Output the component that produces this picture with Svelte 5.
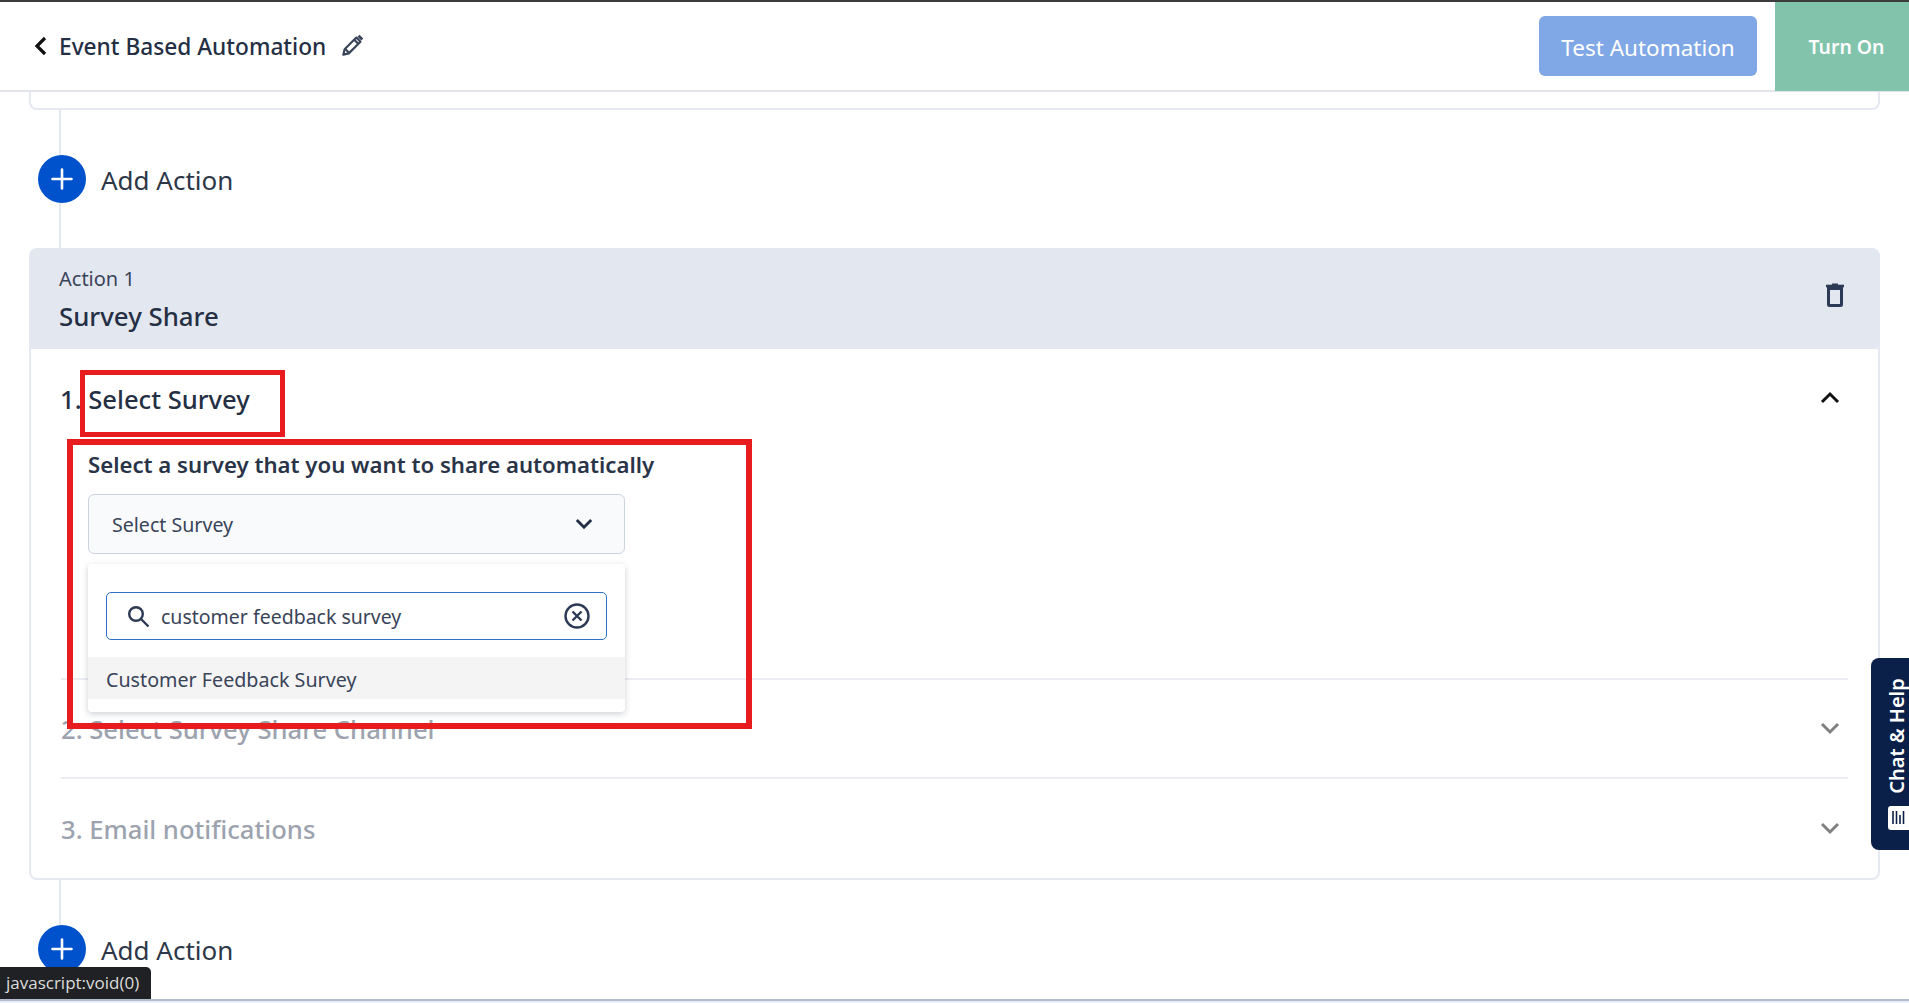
<script>
	const collapsed = [
		{ title: "2. Select Survey Share Channel" },
		{ title: "3. Email notifications" }
	];
	let search = "customer feedback survey";
</script>

<style>
	:global(body) {
		margin: 0;
		background: #fff;
		font-family: "Noto Sans", "Open Sans", sans-serif;
		color: #2d3748;
	}

	.page {
		height: 1003px;
		overflow: hidden;
		display: flex;
		flex-direction: column;
		position: relative;
	}

	.topbar {
		flex: none;
		height: 88px;
		border-top: 2px solid #3c3c3c;
		border-bottom: 2px solid #e2e4ea;
		display: flex;
		align-items: center;
		padding-left: 34px;
	}

	.back {
		width: 14px;
		height: 20px;
		margin-right: 11px;
	}

	.title {
		font-size: 22.7px;
		font-weight: 500;
		color: #252f44;
	}

	.edit {
		width: 26px;
		height: 26px;
		margin-left: 13px;
	}

	.topbar-actions {
		margin-left: auto;
		display: flex;
		align-items: stretch;
		align-self: stretch;
	}

	.test {
		align-self: center;
		width: 218px;
		height: 60px;
		border: none;
		border-radius: 6px;
		background: #81a8e6;
		color: #fff;
		font: 400 22.5px "Noto Sans", sans-serif;
		margin-right: 18px;
		padding: 2px 0 0;
	}

	.turn-on {
		width: 134px;
		margin-bottom: -1px;
		border: none;
		background: #81c3ab;
		color: #fff;
		font: 600 19.4px "Noto Sans", sans-serif;
		padding: 0 0 0 9px;
	}

	.content {
		padding: 0 29px;
	}

	.prev-card {
		height: 16px;
		border: 2px solid #e5e8f1;
		border-top: none;
		border-radius: 0 0 8px 8px;
	}

	.step {
		position: relative;
		height: 138px;
		display: flex;
		align-items: center;
		padding-left: 9px;
		gap: 15px;
	}

	.step::before {
		content: "";
		position: absolute;
		left: 30px;
		top: 0;
		bottom: 0;
		width: 2px;
		background: #e5e8f1;
	}

	.add {
		position: relative;
		width: 48px;
		height: 48px;
		border-radius: 50%;
		background: #0052cc;
		display: flex;
		align-items: center;
		justify-content: center;
		flex: none;
	}

	.add svg {
		width: 24px;
		height: 24px;
	}

	.step span {
		font-size: 26px;
		color: #2d3748;
		padding-top: 2px;
	}

	.action-head {
		height: 101px;
		box-sizing: border-box;
		background: #e3e7f0;
		border-radius: 8px 8px 0 0;
		padding: 16px 31px 0 30px;
		display: flex;
		justify-content: space-between;
		align-items: center;
	}

	.action-head .small {
		font-size: 20px;
		line-height: 30px;
		color: #3a4459;
	}

	.action-head .name {
		font-size: 25.8px;
		font-weight: 500;
		line-height: 40px;
		color: #252f44;
		margin-top: 2px;
	}

	.action-titles {
		margin-top: -13px;
	}

	.trash {
		width: 24px;
		height: 28px;
		margin: -24px 2px 0 0;
	}

	.action-body {
		border: 2px solid #e5e8f1;
		border-top: none;
		border-radius: 0 0 8px 8px;
		padding: 0 30px;
	}

	.section {
		position: relative;
	}

	.section + .section {
		border-top: 2px solid #ecedf2;
	}

	.section-head {
		display: flex;
		justify-content: space-between;
		align-items: center;
		font-size: 25.6px;
		font-weight: 500;
	}

	.section-head svg {
		width: 20px;
		height: 13px;
		margin-right: 8px;
	}

	.open .section-head {
		height: 100px;
		color: #252f44;
	}

	.open .section-head span {
		margin-left: -1px;
	}

	.open .section-head svg {
		margin-top: -4px;
	}

	.collapsed .section-head {
		height: 97px;
		color: #9ca3af;
	}

	.collapsed .section-head span {
		padding-top: 2px;
	}

	.last .section-head {
		height: 99px;
	}

	.panel {
		padding: 0 0 0 27px;
		position: relative;
		height: 229px;
		box-sizing: border-box;
	}

	.panel label {
		display: block;
		font-size: 22.2px;
		font-weight: 600;
		color: #2a3448;
		line-height: 32px;
	}

	.select {
		margin-top: 13px;
		width: 537px;
		height: 60px;
		box-sizing: border-box;
		border: 1px solid #ccd2df;
		border-radius: 6px;
		background: #f9fafc;
		display: flex;
		align-items: center;
		justify-content: space-between;
		padding: 0 31px 0 23px;
		font-size: 19.6px;
		color: #3a4459;
	}

	.select svg {
		width: 18px;
		height: 12px;
	}

	.dropdown {
		position: absolute;
		left: 27px;
		top: 115px;
		width: 537px;
		height: 148px;
		background: #fff;
		border-radius: 4px;
		box-shadow: 0 2px 6px rgba(30, 40, 60, 0.22);
		z-index: 2;
	}

	.search {
		margin: 28px 18px 17px;
		height: 48px;
		box-sizing: border-box;
		border: 1.5px solid #2f6fc9;
		border-radius: 5px;
		display: flex;
		align-items: center;
		padding: 0 15px 0 20px;
		gap: 11px;
	}

	.search input {
		flex: 1;
		min-width: 0;
		border: none;
		outline: none;
		padding: 1px 0 0;
		font: 400 19.5px "Noto Sans", sans-serif;
		color: #3a4459;
		background: transparent;
	}

	.search .glass {
		width: 23px;
		height: 23px;
		flex: none;
	}

	.search .clear {
		width: 28px;
		height: 28px;
		flex: none;
	}

	.option {
		height: 42px;
		box-sizing: border-box;
		display: flex;
		align-items: center;
		padding: 2px 0 0 18px;
		background: #f4f4f5;
		font-size: 19.7px;
		color: #3a4459;
	}

	.mark {
		position: absolute;
		box-sizing: border-box;
		border: 5px solid #e81c1f;
		z-index: 3;
		pointer-events: none;
	}

	.mark-title {
		left: 80px;
		top: 370px;
		width: 205px;
		height: 67px;
	}

	.mark-panel {
		left: 67px;
		top: 439px;
		width: 685px;
		height: 290px;
		border-width: 6px;
	}

	.chat {
		position: absolute;
		right: 0;
		top: 658px;
		width: 38px;
		height: 192px;
		background: #0a2048;
		border-radius: 8px 0 0 8px;
		overflow: hidden;
		z-index: 4;
	}

	.chat span {
		position: absolute;
		left: 26px;
		top: 78px;
		transform: translate(-50%, -50%) rotate(-90deg);
		white-space: nowrap;
		color: #fff;
		font-size: 20px;
		font-weight: 600;
		line-height: 24px;
	}

	.chat svg {
		position: absolute;
		left: 17px;
		top: 148px;
		width: 24px;
		height: 24px;
	}

	.status {
		position: absolute;
		left: 0;
		bottom: 4px;
		height: 32px;
		width: 151px;
		box-sizing: border-box;
		background: #202124;
		color: #dcdcdc;
		border-radius: 0 5px 0 0;
		font: 400 17px/32px "Open Sans", sans-serif;
		padding-left: 6px;
		white-space: nowrap;
		z-index: 5;
	}

	.footer-line {
		position: absolute;
		left: 0;
		right: 0;
		bottom: 0;
		height: 2px;
		border-top: 2px solid #b5bccb;
		background: #e8eef5;
		z-index: 5;
	}
</style>

{#snippet addAction()}
	<div class="step">
		<div class="add">
			<svg viewBox="0 0 24 24" fill="none" stroke="#fff" stroke-width="2.6" stroke-linecap="round"><path d="M12 2.5v19M2.5 12h19" /></svg>
		</div>
		<span>Add Action</span>
	</div>
{/snippet}

{#snippet chevron(up, color)}
	<svg viewBox="0 0 20 13" fill="none" stroke={color} stroke-width="3">
		<path d={up ? "M2 11l8-8 8 8" : "M2 2l8 8 8-8"} />
	</svg>
{/snippet}

<div class="page">
	<header class="topbar">
		<svg class="back" viewBox="0 0 14 20" fill="none" stroke="#111" stroke-width="3.2"><path d="M11 2L3 10l8 8" /></svg>
		<span class="title">Event Based Automation</span>
		<svg class="edit" viewBox="0 0 24 24" fill="none" stroke="#3a4459" stroke-width="2" stroke-linejoin="round">
			<path d="M4 20l1.2-5L16 4.2 19.8 8 9 18.8z" />
			<path d="M14 6.2l3.8 3.8M6 15l3 3" />
			<path d="M18 2.5l3.5 3.5" stroke-width="2.6" />
		</svg>
		<div class="topbar-actions">
			<button class="test">Test Automation</button>
			<button class="turn-on">Turn On</button>
		</div>
	</header>

	<main class="content">
		<div class="prev-card"></div>
		{@render addAction()}

		<section class="action">
			<div class="action-head">
				<div class="action-titles">
					<div class="small">Action 1</div>
					<div class="name">Survey Share</div>
				</div>
				<svg class="trash" viewBox="0 0 24 28" fill="none" stroke="#2d3a55" stroke-width="3">
					<path d="M5.5 7.5h13v16a1 1 0 0 1-1 1h-11a1 1 0 0 1-1-1z" />
					<path d="M3 5h18" stroke-width="2.6" />
					<path d="M9 3.5h6" stroke-width="2" />
				</svg>
			</div>
			<div class="action-body">
				<div class="section open">
					<div class="section-head">
						<span>1. Select Survey</span>
						{@render chevron(true, "#111")}
					</div>
					<div class="panel">
						<label for="survey-search">Select a survey that you want to share automatically</label>
						<div class="select">
							<span>Select Survey</span>
							<svg viewBox="0 0 20 13" fill="none" stroke="#252f44" stroke-width="3.2"><path d="M2 2l8 8 8-8" /></svg>
						</div>
						<div class="dropdown">
							<div class="search">
								<svg class="glass" viewBox="0 0 23 23" fill="none" stroke="#2d3a55" stroke-width="2.4">
									<circle cx="9" cy="9" r="6.8" />
									<path d="M14 14l7.5 7.5" />
								</svg>
								<input id="survey-search" value={search} />
								<svg class="clear" viewBox="0 0 28 28" fill="none" stroke="#2d3a55" stroke-width="2.4">
									<circle cx="14" cy="14" r="11.5" />
									<path d="M9.5 9.5l9 9M18.5 9.5l-9 9" />
								</svg>
							</div>
							<div class="option">Customer Feedback Survey</div>
						</div>
					</div>
				</div>
				{#each collapsed as item, i}
					<div class="section collapsed" class:last={i === collapsed.length - 1}>
						<div class="section-head">
							<span>{item.title}</span>
							{@render chevron(false, "#808080")}
						</div>
					</div>
				{/each}
			</div>
		</section>

		{@render addAction()}
	</main>

	<div class="mark mark-title"></div>
	<div class="mark mark-panel"></div>

	<aside class="chat">
		<span>Chat &amp; Help</span>
		<svg viewBox="0 0 24 24">
			<rect x="0" y="0" width="24" height="24" rx="3" fill="#fff" />
			<path d="M5 5v13M8.5 5v13M12 9v9M15.5 5v13" stroke="#0a2048" stroke-width="1.6" />
		</svg>
	</aside>

	<div class="status">javascript:void(0)</div>
	<div class="footer-line"></div>
</div>
